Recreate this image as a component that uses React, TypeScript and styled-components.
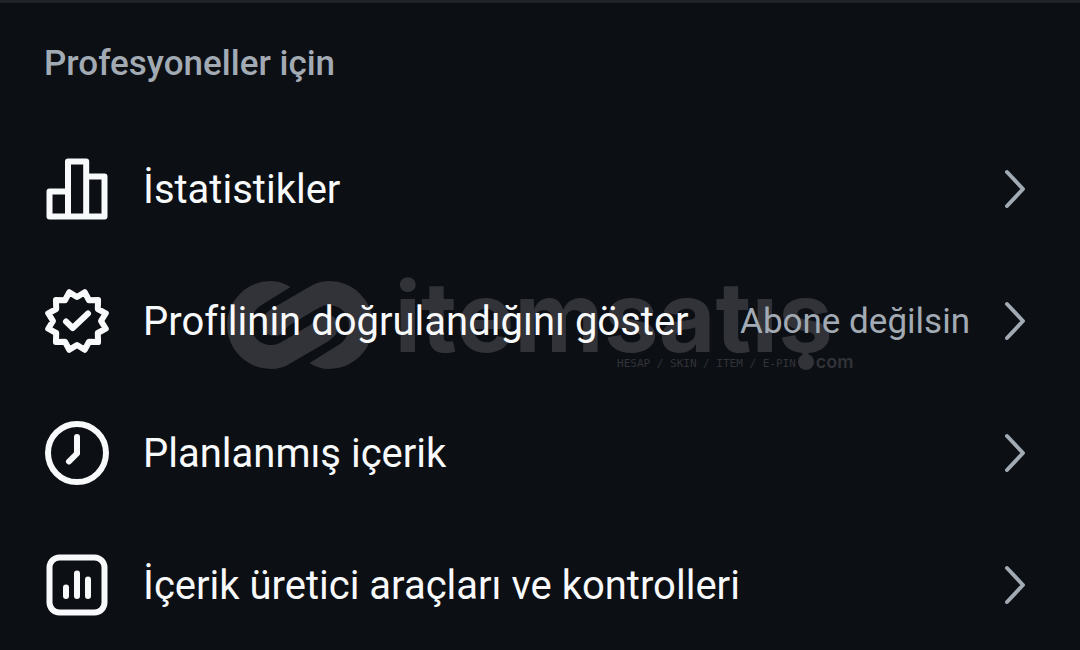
import React from "react";
import styled, { createGlobalStyle } from "styled-components";

const GlobalStyle = createGlobalStyle`
  * { box-sizing: border-box; }
  body {
    margin: 0;
    background: #0c0f14;
    color: #f8f9fb;
    font-family: Roboto, "Noto Sans", sans-serif;
    font-variant-ligatures: none;
  }
`;

const Section = styled.section`
  position: relative;
  border-top: 3px solid #212328;
  padding: 37px 44px 0;
`;

const Heading = styled.h2`
  margin: 0;
  font-size: 35px;
  line-height: 48px;
  font-weight: 500;
  color: #a2aab4;
`;

const List = styled.ul`
  position: relative;
  display: flex;
  flex-direction: column;
  gap: 32px;
  margin: 51px 0 0;
  padding: 0;
  list-style: none;
`;

const Row = styled.a`
  display: flex;
  align-items: center;
  height: 100px;
  color: inherit;
  text-decoration: none;
`;

const IconSvg = styled.svg`
  flex: none;
  width: 66px;
  height: 66px;
  margin-right: 33px;
  fill: none;
  stroke: #f8f9fb;
  stroke-width: 6;
  stroke-linecap: round;
  stroke-linejoin: round;
`;

const Label = styled.span`
  flex: 1;
  padding-top: 2px;
  font-size: 40px;
  line-height: 48px;
  white-space: nowrap;
`;

const Status = styled.span`
  padding-top: 2px;
  font-size: 35px;
  line-height: 48px;
  white-space: nowrap;
  color: #a2aab4;
`;

const ChevronSvg = styled.svg`
  flex: none;
  width: 24px;
  height: 40px;
  margin: 0 9px 0 33px;
  fill: none;
  stroke: #a2aab4;
  stroke-width: 4;
  stroke-linecap: round;
  stroke-linejoin: round;
`;

const Watermark = styled.div`
  position: absolute;
  top: 272px;
  left: 0;
  right: 0;
  display: flex;
  justify-content: center;
  gap: 22px;
  color: #323338;
  pointer-events: none;
`;

const Emblem = styled.svg`
  flex: none;
  width: 146px;
  height: 90px;
  margin-top: 5px;
  fill: currentColor;
`;

const Brand = styled.div`
  width: 459px;
`;

const Wordmark = styled.div`
  height: 81px;
  padding-top: 4px;
  overflow: hidden;
  font-family: Inter, sans-serif;
  font-size: 98px;
  line-height: 76px;
  font-weight: 700;
  white-space: nowrap;
`;

const Tagline = styled.div`
  display: flex;
  align-items: center;
  justify-content: flex-end;
  height: 12px;
  font-family: "DejaVu Sans Mono", monospace;
  font-size: 11px;
  line-height: 16px;
  white-space: nowrap;
`;

const Slogan = styled.span`
  padding-top: 4px;
`;

const Dot = styled.span`
  width: 16px;
  height: 16px;
  margin: 0 2px;
  border-radius: 50%;
  background: currentColor;
`;

const Domain = styled.span`
  font-family: Inter, sans-serif;
  font-size: 18px;
  line-height: 16px;
  font-weight: 600;
`;

const burst = Array.from({ length: 24 }, (_, i) => {
  const angle = ((i * 15 + 15) * Math.PI) / 180;
  const radius = i % 2 === 0 ? 29.8 : 24;
  return `${33 + radius * Math.sin(angle)},${33 + radius * Math.cos(angle)}`;
}).join(" ");

const StatsIcon = () => (
  <IconSvg viewBox="0 0 66 66" aria-hidden="true">
    <path d="M24 60.500V5.500H42.200V60.500M24 35.500H5.500V60.500H60.500V20.500H42.200" />
  </IconSvg>
);

const VerifiedIcon = () => (
  <IconSvg viewBox="0 0 66 66" aria-hidden="true">
    <polygon points={burst} />
    <path d="M22 33.500L28.700 40L44 25.500" />
  </IconSvg>
);

const ClockIcon = () => (
  <IconSvg viewBox="0 0 66 66" aria-hidden="true">
    <circle cx="33" cy="33" r="29" />
    <path d="M33 17V33.500L25 41.500" />
  </IconSvg>
);

const ToolsIcon = () => (
  <IconSvg viewBox="0 0 66 66" aria-hidden="true">
    <rect x="5.500" y="5.500" width="55" height="55" rx="10" />
    <path d="M22 35.500V44M33 21.500V44M44 27.500V44" />
  </IconSvg>
);

const items = [
  { label: "İstatistikler", Icon: StatsIcon },
  { label: "Profilinin doğrulandığını göster", Icon: VerifiedIcon, status: "Abone değilsin" },
  { label: "Planlanmış içerik", Icon: ClockIcon },
  { label: "İçerik üretici araçları ve kontrolleri", Icon: ToolsIcon },
];

const hook =
  "M63.500 7C57 3 51 1 44 1A44 44 0 0 0 44 89C51 89 58 87 64 83L100 62C106 58 111 54 111 47C111 39 105 34 98 34C91 34 89 41 83 45L58 60C53 63 49 65 44 65A20 20 0 0 1 24 45C24 37 27 30 33 26Z";

export default function App() {
  return (
    <>
      <GlobalStyle />
      <Section>
        <Watermark aria-hidden="true">
          <Emblem viewBox="0 0 146 90">
            <path d={hook} />
            <path d={hook} transform="rotate(180 73 45)" />
          </Emblem>
          <Brand>
            <Wordmark>itemsatış</Wordmark>
            <Tagline>
              <Slogan>HESAP / SKIN / ITEM / E-PIN</Slogan>
              <Dot />
              <Domain>com</Domain>
            </Tagline>
          </Brand>
        </Watermark>
        <Heading>Profesyoneller için</Heading>
        <List>
          {items.map(({ label, Icon, status }) => (
            <li key={label}>
              <Row href="#">
                <Icon />
                <Label>{label}</Label>
                {status && <Status>{status}</Status>}
                <ChevronSvg viewBox="0 0 24 40" aria-hidden="true">
                  <path d="M4 3L20 20L4 37" />
                </ChevronSvg>
              </Row>
            </li>
          ))}
        </List>
      </Section>
    </>
  );
}
